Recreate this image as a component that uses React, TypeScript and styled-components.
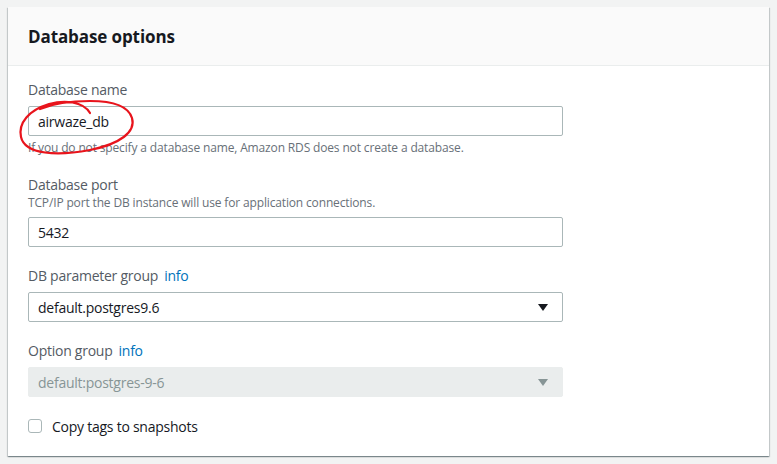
import styled, { createGlobalStyle } from "styled-components";

const GlobalStyle = createGlobalStyle`
  html, body {
    margin: 0;
    padding: 0;
    background: #f2f3f3;
    font-family: "Open Sans", "Noto Sans", sans-serif;
    color: #16191f;
  }
`;

const Page = styled.div`
  padding: 7px 9px 0 8px;
  height: 464px;
  box-sizing: border-box;
  overflow: hidden;
`;

const Card = styled.div`
  position: relative;
  width: 761px;
  background: #fff;
  box-shadow: 0 1px 1px 0 rgba(0, 28, 36, 0.3), 1px 1px 1px 0 rgba(0, 28, 36, 0.15),
    -1px 1px 1px 0 rgba(0, 28, 36, 0.15);
`;

const Header = styled.div`
  height: 58px;
  display: flex;
  align-items: center;
  padding: 0 20px;
  background: #fafafa;
  border-bottom: 1px solid #eaeded;
`;

const Title = styled.h2`
  margin: 0;
  font-size: 17px;
  font-weight: 700;
  letter-spacing: -0.1px;
  color: #16191f;
`;

const Body = styled.div`
  display: flex;
  flex-direction: column;
  gap: 19px;
  padding: 14px 20px 20px;
  font-size: 14px;
  letter-spacing: -0.25px;
`;

const Field = styled.div`
  display: flex;
  flex-direction: column;
`;

const Label = styled.label`
  line-height: 20px;
  color: #545b64;
  margin-bottom: 6px;
`;

const Info = styled.a`
  color: #0073bb;
  margin-left: 6px;
  text-decoration: none;
`;

const Description = styled.div`
  font-size: 12px;
  line-height: 14px;
  letter-spacing: -0.15px;
  color: #687078;
  margin: -5px 0 7px;
`;

const Hint = styled.div`
  font-size: 12px;
  line-height: 16px;
  letter-spacing: -0.15px;
  color: #687078;
  margin-top: 4px;
`;

const Box = styled.div<{ $disabled?: boolean }>`
  width: 535px;
  height: 30px;
  box-sizing: border-box;
  display: flex;
  align-items: center;
  justify-content: space-between;
  padding: 0 14px 0 9px;
  border-radius: 2px;
  border: 1px solid ${({ $disabled }) => ($disabled ? "#eaeded" : "#aab7b8")};
  background: ${({ $disabled }) => ($disabled ? "#eaeded" : "#fff")};
  color: ${({ $disabled }) => ($disabled ? "#879596" : "#16191f")};
`;

const Arrow = styled.span<{ $disabled?: boolean }>`
  width: 0;
  height: 0;
  border-left: 5px solid transparent;
  border-right: 5px solid transparent;
  border-top: 7px solid ${({ $disabled }) => ($disabled ? "#879596" : "#16191f")};
`;

const CheckRow = styled.div`
  display: flex;
  align-items: center;
  gap: 10px;
  height: 20px;
  color: #16191f;
`;

const Checkbox = styled.span`
  width: 14px;
  height: 14px;
  box-sizing: border-box;
  border: 1px solid #aab7b8;
  border-radius: 3px;
  background: #fff;
`;

const Scribble = styled.svg`
  position: absolute;
  left: -8px;
  top: -7px;
  pointer-events: none;
`;

export default function App() {
  return (
    <Page>
      <GlobalStyle />
      <Card>
        <Header>
          <Title>Database options</Title>
        </Header>
        <Body>
          <Field>
            <Label>Database name</Label>
            <Box>airwaze_db</Box>
            <Hint>If you do not specify a database name, Amazon RDS does not create a database.</Hint>
          </Field>
          <Field>
            <Label>Database port</Label>
            <Description>TCP/IP port the DB instance will use for application connections.</Description>
            <Box>5432</Box>
          </Field>
          <Field>
            <Label>
              DB parameter group<Info>info</Info>
            </Label>
            <Box>
              default.postgres9.6
              <Arrow />
            </Box>
          </Field>
          <Field>
            <Label>
              Option group<Info>info</Info>
            </Label>
            <Box $disabled>
              default:postgres-9-6
              <Arrow $disabled />
            </Box>
          </Field>
          <CheckRow>
            <Checkbox />
            Copy tags to snapshots
          </CheckRow>
        </Body>
        <Scribble width="160" height="170" viewBox="0 0 160 170">
          <path
            d="M 90 113 C 83 101, 64 100, 49 104 C 29 110, 18 123, 21 137 C 25 155, 58 156, 90 150 C 120 144, 136 132, 132 118 C 128 105, 110 101, 90 101 C 70 101, 52 104, 40 109"
            fill="none"
            stroke="#e8141c"
            strokeWidth="2.2"
            strokeLinecap="round"
          />
        </Scribble>
      </Card>
    </Page>
  );
}
